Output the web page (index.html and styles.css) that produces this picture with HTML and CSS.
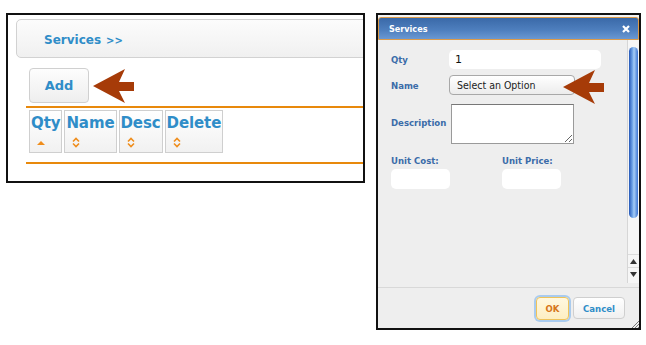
FILE: index.html
```html
<!DOCTYPE html>
<html lang="en">
<head>
  <meta charset="UTF-8">
  <meta name="viewport" content="width=device-width, initial-scale=1.0">
  <title>Services</title>
  <link rel="stylesheet" href="styles.css">
</head>
<body>
  <div class="shot shot-grid">
    <div class="crumb">Services <span class="crumb-sep">&gt;&gt;</span></div>

    <div class="toolbar">
      <button class="add-btn">Add</button>
    </div>

    <div class="grid-head">
      <div class="col">
        <span class="col-title">Qty</span>
        <svg class="sort" width="8" height="11" viewBox="0 0 8 11"><polygon points="0,8 4,4 8,8" fill="#ef8d1c"/></svg>
      </div>
      <div class="col">
        <span class="col-title">Name</span>
        <svg class="sort" width="8" height="11" viewBox="0 0 8 11"><polyline points="1,4.5 4,1.5 7,4.5" fill="none" stroke="#ef8d1c" stroke-width="1.6"/><polyline points="1,6.5 4,9.5 7,6.5" fill="none" stroke="#ef8d1c" stroke-width="1.6"/></svg>
      </div>
      <div class="col">
        <span class="col-title">Desc</span>
        <svg class="sort" width="8" height="11" viewBox="0 0 8 11"><polyline points="1,4.5 4,1.5 7,4.5" fill="none" stroke="#ef8d1c" stroke-width="1.6"/><polyline points="1,6.5 4,9.5 7,6.5" fill="none" stroke="#ef8d1c" stroke-width="1.6"/></svg>
      </div>
      <div class="col">
        <span class="col-title">Delete</span>
        <svg class="sort" width="8" height="11" viewBox="0 0 8 11"><polyline points="1,4.5 4,1.5 7,4.5" fill="none" stroke="#ef8d1c" stroke-width="1.6"/><polyline points="1,6.5 4,9.5 7,6.5" fill="none" stroke="#ef8d1c" stroke-width="1.6"/></svg>
      </div>
    </div>

    <!-- callout pointing at the Add button -->
    <svg class="callout callout-add" width="42" height="35" viewBox="0 0 42 35"><polygon points="0,17 32,0 26,13 41,13 41,22 26,22 32,34" fill="#a63b08"/></svg>
  </div>

  <div class="shot shot-dialog">
    <div class="dialog">
      <div class="dialog-title">
        <span>Services</span>
        <svg class="close" width="8" height="8" viewBox="0 0 8 8"><path d="M1 1L7 7M7 1L1 7" stroke="#fff" stroke-width="2.2"/></svg>
      </div>

      <div class="dialog-body">
        <div class="form">
          <div class="form-rows">
            <label class="field-label">Qty</label>
            <input class="text-in qty-in" type="text" value="1">

            <label class="field-label">Name</label>
            <div class="select">Select an Option</div>

            <label class="field-label">Description</label>
            <textarea class="desc-in"></textarea>
          </div>

          <div class="price-row">
            <div class="price-cell">
              <label class="field-label">Unit Cost:</label>
              <input class="text-in price-in" type="text">
            </div>
            <div class="price-cell">
              <label class="field-label">Unit Price:</label>
              <input class="text-in price-in" type="text">
            </div>
          </div>
        </div>

        <div class="scrollbar">
          <div class="thumb"></div>
          <div class="track"></div>
          <div class="step"><svg width="7" height="5" viewBox="0 0 7 5"><polygon points="0,5 3.5,0 7,5" fill="#333"/></svg></div>
          <div class="step"><svg width="7" height="5" viewBox="0 0 7 5"><polygon points="0,0 3.5,5 7,0" fill="#333"/></svg></div>
        </div>
      </div>

      <div class="dialog-foot">
        <button class="btn btn-ok">OK</button>
        <button class="btn btn-cancel">Cancel</button>
      </div>

      <svg class="grip" width="8" height="8" viewBox="0 0 8 8"><path d="M8 1L1 8M8 4L4 8M8 7L7 8" stroke="#777" stroke-width="1"/></svg>
    </div>

    <!-- callout pointing at the Name select -->
    <svg class="callout callout-name" width="42" height="35" viewBox="0 0 42 35"><polygon points="0,17 32,0 26,13 41,13 41,22 26,22 32,34" fill="#a63b08"/></svg>
  </div>
</body>
</html>
```

FILE: styles.css
```css
body {
  margin: 0;
  padding: 13px 0 0 6px;
  display: flex;
  align-items: flex-start;
  background-color: #fff;
  font-family: "DejaVu Sans", Verdana, sans-serif;
}

.shot {
  position: relative;
  border: 2px solid #111;
  box-sizing: border-box;
  overflow: hidden;
}

/* left screenshot: grid with toolbar */

.shot-grid {
  width: 359px;
  height: 170px;
  padding: 4px 0 0 8px;
}

.crumb {
  height: 39px;
  width: calc(100% + 20px);
  box-sizing: border-box;
  padding: 3px 0 0 27px;
  display: flex;
  align-items: center;
  border: 1px solid #d2d2d2;
  border-radius: 5px;
  background: linear-gradient(to bottom, #fcfcfc, #f0f0f0);
  color: #2f8dc8;
  font-size: 12px;
  font-weight: bold;
}

.crumb-sep {
  margin-left: 5px;
  font-size: 10px;
}

.toolbar {
  margin-top: 10px;
  padding-left: 13px;
}

.add-btn {
  width: 60px;
  height: 35px;
  border: 1px solid #d0d0d0;
  border-radius: 4px;
  background: linear-gradient(to bottom, #fdfdfd, #eeeeee);
  color: #2f8dc8;
  font-family: inherit;
  font-size: 13px;
  font-weight: bold;
  padding: 0;
}

.grid-head {
  margin: 3px 0 0 10px;
  padding: 2px 0 9px 3px;
  border-top: 2px solid #e8890c;
  border-bottom: 2px solid #e8890c;
  display: flex;
  gap: 2px;
}

.col {
  height: 43px;
  box-sizing: border-box;
  padding: 2px 1px 0 1px;
  display: flex;
  flex-direction: column;
  border: 1px solid #cfcfcf;
  background: linear-gradient(to bottom, #ffffff, #f1f1f1);
}

.col-title {
  color: #2f8dc8;
  font-size: 15px;
  font-weight: bold;
  letter-spacing: -0.1px;
  line-height: 20px;
}

.sort {
  margin: 4px 0 0 6px;
}

.callout {
  position: absolute;
}

.callout-add {
  left: 85px;
  top: 54px;
}

/* right screenshot: edit dialog */

.shot-dialog {
  margin-left: 11px;
  width: 265px;
  height: 317px;
  padding-top: 2px;
  background-color: #f4f4f4;
}

.dialog {
  position: relative;
  height: 100%;
  display: flex;
  flex-direction: column;
  background-color: #eeeeee;
  font-family: "DejaVu Sans Condensed", "DejaVu Sans", sans-serif;
}

.dialog-title {
  height: 23px;
  box-sizing: border-box;
  padding: 0 8px 0 10px;
  display: flex;
  align-items: center;
  justify-content: space-between;
  border: 1px solid #dc9a48;
  border-radius: 3px 3px 0 0;
  background: linear-gradient(to bottom, #3a69a8, #4f80bf 60%, #6a98d2);
  color: #fff;
  font-size: 9px;
  font-weight: bold;
}

.dialog-body {
  flex: 1;
  display: flex;
}

.form {
  flex: 1;
  padding: 10px 0 0 13px;
}

.form-rows {
  display: grid;
  grid-template-columns: 58px auto;
  row-gap: 6px;
  align-items: center;
  justify-items: start;
}

.form-rows .desc-in {
  margin-top: 3px;
}

.field-label {
  color: #3b6ca9;
  font-size: 9.5px;
  font-weight: bold;
}

.text-in {
  border: none;
  border-radius: 5px;
  background-color: #fff;
  box-sizing: border-box;
  padding: 0 6px;
  font-family: "DejaVu Sans", sans-serif;
  font-size: 11px;
  color: #111;
  outline: none;
}

.qty-in {
  width: 152px;
  height: 19px;
}

.select {
  width: 126px;
  height: 20px;
  box-sizing: border-box;
  padding-left: 7px;
  display: flex;
  align-items: center;
  border: 1px solid #a8a8a8;
  border-radius: 4px;
  background: linear-gradient(to bottom, #ffffff, #ececec);
  color: #222;
  font-size: 10.5px;
}

.desc-in {
  width: 123px;
  height: 40px;
  box-sizing: border-box;
  margin: 0 0 0 2px;
  border: 1px solid #9a9a9a;
  border-top-color: #777;
  background-color: #fff;
  padding: 2px;
}

.price-row {
  margin-top: 11px;
  display: grid;
  grid-template-columns: 111px 111px;
}

.price-cell {
  display: flex;
  flex-direction: column;
  gap: 3px;
}

.price-in {
  width: 59px;
  height: 20px;
}

.scrollbar {
  width: 11px;
  display: flex;
  flex-direction: column;
  border-left: 1px solid #d6d6d6;
  background-color: #f6f6f6;
  margin-bottom: 4px;
}

.thumb {
  height: 171px;
  margin: 7px 1px 0 1px;
  border-radius: 5px;
  background: linear-gradient(to right, #2457b8, #7fb2ee 45%, #a8cdf5 55%, #3a74d4);
}

.track {
  flex: 1;
}

.step {
  height: 12px;
  display: flex;
  align-items: center;
  justify-content: center;
  border-top: 1px solid #dcdcdc;
}

.step:last-child {
  margin-bottom: 3px;
}

.dialog-foot {
  height: 40px;
  display: flex;
  align-items: center;
  justify-content: flex-end;
  gap: 4px;
  padding-right: 14px;
  border-top: 1px solid #d8d8d8;
}

.btn {
  height: 22px;
  box-sizing: border-box;
  border-radius: 4px;
  font-family: inherit;
  font-size: 9.5px;
  font-weight: bold;
  padding: 0;
}

.btn-ok {
  width: 33px;
  height: 23px;
  border: 1px solid #eec35a;
  background: linear-gradient(to bottom, #fff8e0, #fdeec2);
  color: #d6761a;
  box-shadow: 0 0 0 2px #a9cbee;
}

.btn-cancel {
  width: 52px;
  border: 1px solid #cfcfcf;
  background: linear-gradient(to bottom, #ffffff, #f0f0f0);
  color: #2f8dc8;
}

.grip {
  position: absolute;
  right: 0;
  bottom: 0;
}

.callout-name {
  left: 185px;
  top: 55px;
}
```
